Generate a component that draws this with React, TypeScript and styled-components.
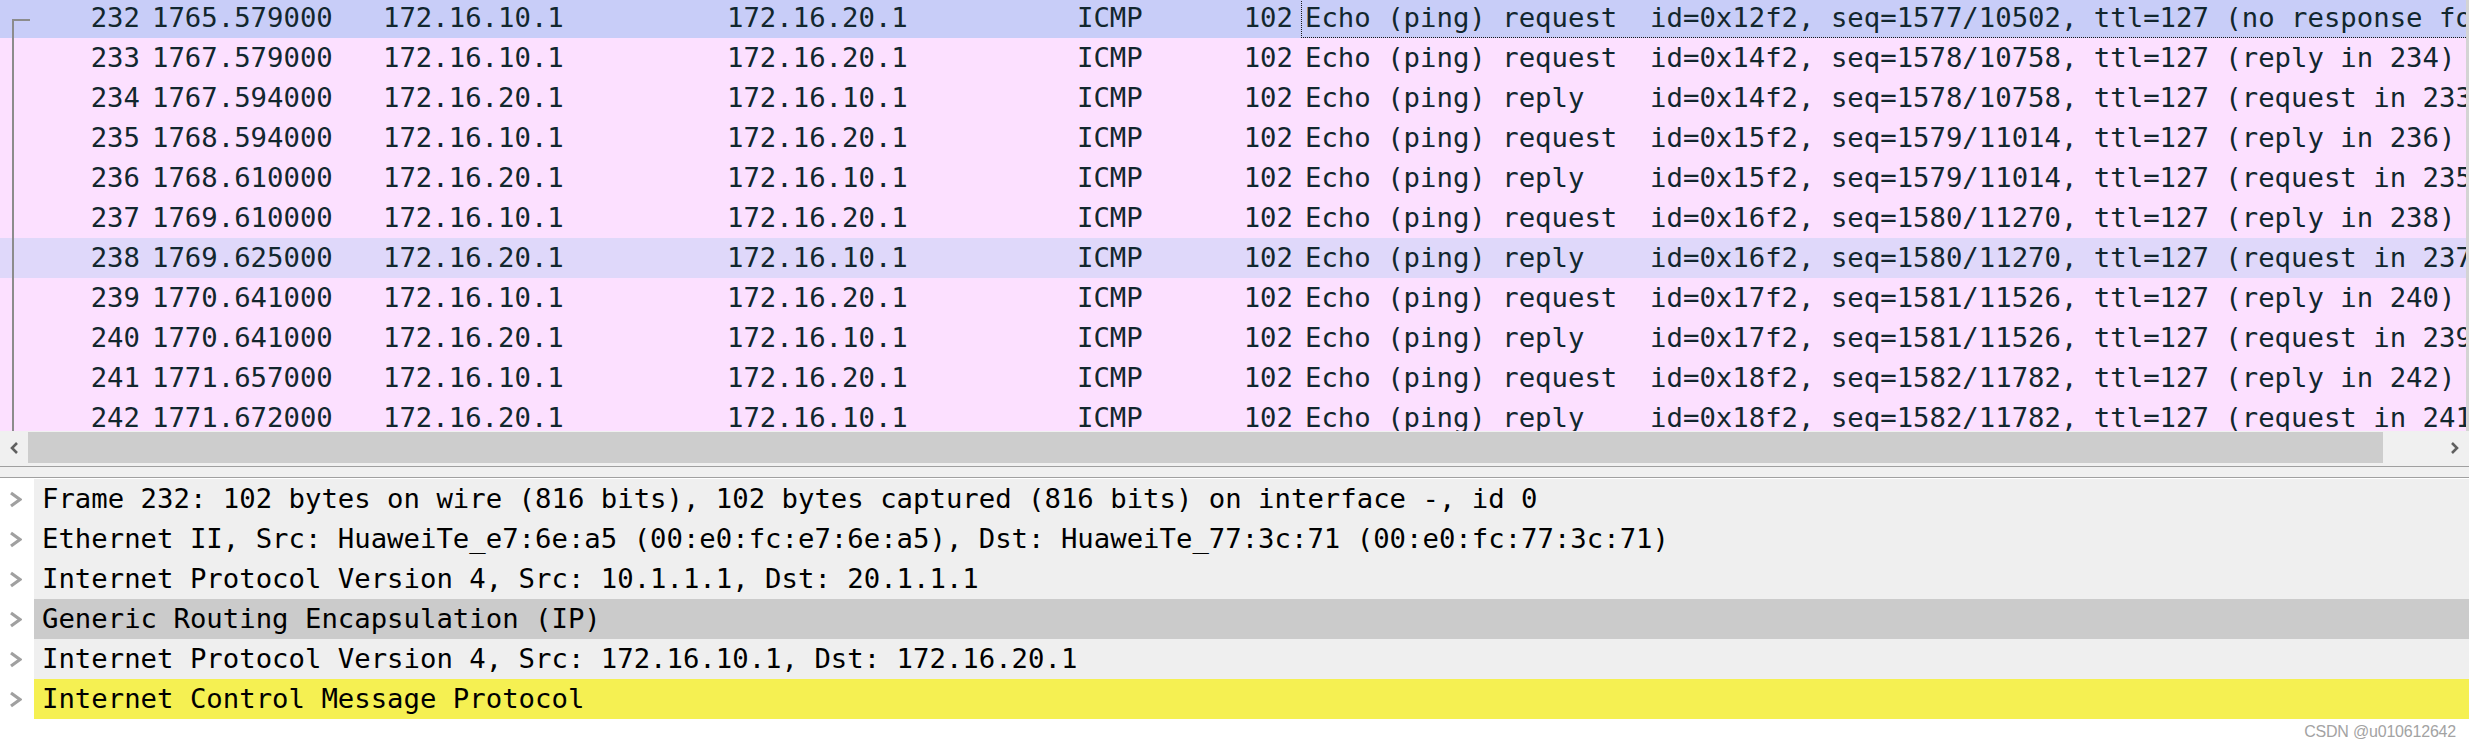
import React from "react";
import styled, { createGlobalStyle } from "styled-components";

const GlobalStyle = createGlobalStyle`
  html, body { margin: 0; padding: 0; background: #ffffff; overflow: hidden; }
  #root { width: 2469px; height: 742px; }
`;

const MONO = `"DejaVu Sans Mono", "Liberation Mono", monospace`;

const Screen = styled.div`
  position: relative;
  width: 2469px;
  height: 742px;
  overflow: hidden;
  background: #ffffff;
  display: flex;
  flex-direction: column;
  font-family: ${MONO};
  font-size: 27.3px;
`;

const PacketViewport = styled.div`
  height: 431px;
  overflow: hidden;
  border-right: 3px solid #d4d4d4;
  background: #ffffff;
`;

const PacketRows = styled.div`
  margin-top: -2px;
  display: flex;
  flex-direction: column;
`;

type RowKind = "selected" | "hover" | "normal";

const rowBg: Record<RowKind, string> = {
  selected: "#c8cdf8",
  hover: "#dfd8fa",
  normal: "#fce0ff",
};

const PacketRow = styled.div<{ $kind: RowKind }>`
  display: grid;
  grid-template-columns: 146px 231px 344px 350px 89px 139px 1fr;
  height: 40px;
  line-height: 40px;
  background: ${(p) => rowBg[p.$kind]};
  color: #12272e;
  white-space: pre;
`;

const Cell = styled.div<{ $align?: "left" | "right" }>`
  position: relative;
  padding: 0 6px;
  overflow: hidden;
  text-align: ${(p) => p.$align ?? "left"};
`;

const InfoCell = styled.div<{ $focused?: boolean }>`
  position: relative;
  padding: 0 6px;
  overflow: visible;
  min-width: 0;
  &::after {
    content: "";
    display: ${(p) => (p.$focused ? "block" : "none")};
    position: absolute;
    left: 2px;
    top: 0;
    bottom: 0;
    right: -40px;
    border: 1px dotted #1a1a1a;
  }
`;

const RelatedLine = styled.span<{ $first?: boolean }>`
  position: absolute;
  left: 12px;
  width: 2px;
  top: ${(p) => (p.$first ? "21px" : "0")};
  bottom: 0;
  background: #8c8c8c;
  &::before {
    content: "";
    display: ${(p) => (p.$first ? "block" : "none")};
    position: absolute;
    left: 0;
    top: 0;
    width: 18px;
    height: 2px;
    background: #8c8c8c;
  }
`;

const Scrollbar = styled.div`
  height: 35px;
  display: flex;
  background: #f0f0f0;
`;

const ArrowButton = styled.div`
  width: 28px;
  height: 33px;
  display: flex;
  align-items: center;
  justify-content: center;
`;

const Track = styled.div`
  flex: 1;
  padding-top: 1px;
`;

const Thumb = styled.div`
  height: 31px;
  background: #cdcdcd;
`;

const Splitter = styled.div`
  height: 10px;
  background: #f0f0f0;
  border-top: 1px solid #a0a0a0;
  border-bottom: 1px solid #a0a0a0;
`;

const Details = styled.div`
  flex: 1;
  padding-top: 1px;
  background: #ffffff;
  display: flex;
  flex-direction: column;
`;

type DetailKind = "plain" | "hover" | "highlight";
const detailBg: Record<DetailKind, string> = {
  plain: "#efefef",
  hover: "#cbcbcb",
  highlight: "#f5f052",
};

const DetailRow = styled.div`
  display: flex;
  height: 40px;
`;

const Expander = styled.div`
  width: 34px;
  display: flex;
  align-items: center;
  padding-left: 9px;
  box-sizing: border-box;
`;

const DetailText = styled.div<{ $kind: DetailKind }>`
  flex: 1;
  background: ${(p) => detailBg[p.$kind]};
  line-height: 40px;
  padding-left: 8px;
  color: #000000;
  white-space: pre;
  overflow: hidden;
`;

const Watermark = styled.div`
  position: absolute;
  right: 13px;
  bottom: 1px;
  font-family: "Liberation Sans", Arial, sans-serif;
  font-size: 16px;
  color: #a3a3a3;
  letter-spacing: -0.2px;
`;

const Chevron = () => (
  <svg width="13" height="17" viewBox="0 0 13 17">
    <polyline points="2,2 11,8.5 2,15" fill="none" stroke="#a0a0a0" strokeWidth="3.2" />
  </svg>
);

const ArrowIcon = ({ dir }: { dir: "left" | "right" }) => (
  <svg width="10" height="14" viewBox="0 0 10 14">
    <polyline
      points={dir === "left" ? "8,2 3,7 8,12" : "2,2 7,7 2,12"}
      fill="none"
      stroke="#606060"
      strokeWidth="2.6"
    />
  </svg>
);

type Packet = {
  no: number;
  time: string;
  src: string;
  dst: string;
  info: string;
  kind: RowKind;
};

const A = "172.16.10.1";
const B = "172.16.20.1";

const packets: Packet[] = [
  { no: 232, time: "1765.579000", src: A, dst: B, info: "Echo (ping) request  id=0x12f2, seq=1577/10502, ttl=127 (no response found!)", kind: "selected" },
  { no: 233, time: "1767.579000", src: A, dst: B, info: "Echo (ping) request  id=0x14f2, seq=1578/10758, ttl=127 (reply in 234)", kind: "normal" },
  { no: 234, time: "1767.594000", src: B, dst: A, info: "Echo (ping) reply    id=0x14f2, seq=1578/10758, ttl=127 (request in 233)", kind: "normal" },
  { no: 235, time: "1768.594000", src: A, dst: B, info: "Echo (ping) request  id=0x15f2, seq=1579/11014, ttl=127 (reply in 236)", kind: "normal" },
  { no: 236, time: "1768.610000", src: B, dst: A, info: "Echo (ping) reply    id=0x15f2, seq=1579/11014, ttl=127 (request in 235)", kind: "normal" },
  { no: 237, time: "1769.610000", src: A, dst: B, info: "Echo (ping) request  id=0x16f2, seq=1580/11270, ttl=127 (reply in 238)", kind: "normal" },
  { no: 238, time: "1769.625000", src: B, dst: A, info: "Echo (ping) reply    id=0x16f2, seq=1580/11270, ttl=127 (request in 237)", kind: "hover" },
  { no: 239, time: "1770.641000", src: A, dst: B, info: "Echo (ping) request  id=0x17f2, seq=1581/11526, ttl=127 (reply in 240)", kind: "normal" },
  { no: 240, time: "1770.641000", src: B, dst: A, info: "Echo (ping) reply    id=0x17f2, seq=1581/11526, ttl=127 (request in 239)", kind: "normal" },
  { no: 241, time: "1771.657000", src: A, dst: B, info: "Echo (ping) request  id=0x18f2, seq=1582/11782, ttl=127 (reply in 242)", kind: "normal" },
  { no: 242, time: "1771.672000", src: B, dst: A, info: "Echo (ping) reply    id=0x18f2, seq=1582/11782, ttl=127 (request in 241)", kind: "normal" },
];

const details: { text: string; kind: DetailKind }[] = [
  { text: "Frame 232: 102 bytes on wire (816 bits), 102 bytes captured (816 bits) on interface -, id 0", kind: "plain" },
  { text: "Ethernet II, Src: HuaweiTe_e7:6e:a5 (00:e0:fc:e7:6e:a5), Dst: HuaweiTe_77:3c:71 (00:e0:fc:77:3c:71)", kind: "plain" },
  { text: "Internet Protocol Version 4, Src: 10.1.1.1, Dst: 20.1.1.1", kind: "plain" },
  { text: "Generic Routing Encapsulation (IP)", kind: "hover" },
  { text: "Internet Protocol Version 4, Src: 172.16.10.1, Dst: 172.16.20.1", kind: "plain" },
  { text: "Internet Control Message Protocol", kind: "highlight" },
];

export default function App() {
  return (
    <>
      <GlobalStyle />
      <Screen>
        <PacketViewport>
          <PacketRows>
            {packets.map((p, i) => (
              <PacketRow key={p.no} $kind={p.kind}>
                <Cell $align="right">
                  <RelatedLine $first={i === 0} />
                  {p.no}
                </Cell>
                <Cell>{p.time}</Cell>
                <Cell>{p.src}</Cell>
                <Cell>{p.dst}</Cell>
                <Cell>ICMP</Cell>
                <Cell $align="right">102</Cell>
                <InfoCell $focused={i === 0}>{p.info}</InfoCell>
              </PacketRow>
            ))}
          </PacketRows>
        </PacketViewport>
        <Scrollbar>
          <ArrowButton>
            <ArrowIcon dir="left" />
          </ArrowButton>
          <Track>
            <Thumb style={{ width: "97.6%" }} />
          </Track>
          <ArrowButton>
            <ArrowIcon dir="right" />
          </ArrowButton>
        </Scrollbar>
        <Splitter />
        <Details>
          {details.map((d) => (
            <DetailRow key={d.text}>
              <Expander>
                <Chevron />
              </Expander>
              <DetailText $kind={d.kind}>{d.text}</DetailText>
            </DetailRow>
          ))}
        </Details>
        <Watermark>CSDN @u010612642</Watermark>
      </Screen>
    </>
  );
}
